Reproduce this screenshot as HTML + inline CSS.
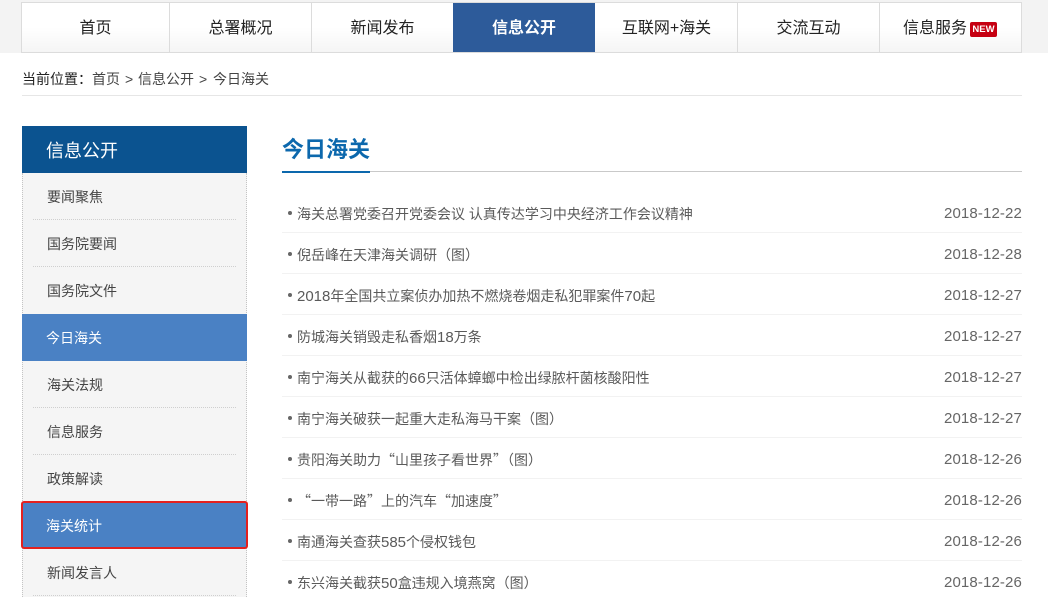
<!DOCTYPE html>
<html lang="zh-CN">
<head>
<meta charset="utf-8">
<title>今日海关</title>
<style>
html,body{margin:0;padding:0;background:#fff}
body{position:relative;width:1048px;height:597px;overflow:hidden;font-family:"Liberation Sans","Noto Sans CJK SC",sans-serif;color:#333}
div,a,span{position:absolute;display:block;white-space:nowrap;box-sizing:border-box}
span.i{position:static;display:inline}
span.n{position:static;display:inline;font-size:15px}
span.q{position:static;display:inline;font-family:"Noto Sans CJK SC",sans-serif}
.strip{left:0;top:0;width:1048px;height:53px;background:#f3f3f3}
.navwrap{left:21px;top:2px;width:1001px;height:51px;background:linear-gradient(#fff 0,#fff 50%,#f5f5f5 100%);border:1px solid #dcdcdc}
.nav{top:3px;height:49px;line-height:51px;text-align:center;font-size:16px;color:#222;border-right:1px solid #dcdcdc}
.nav.on{background:#2d5b9a;color:#fff;font-weight:bold;border-right:0}
.new{left:970px;top:22px;width:27px;height:15px;background:#c60012;border-radius:2px;color:#fff;font-size:9.5px;font-weight:bold;line-height:15px;text-align:center}
.crumb{top:70px;font-size:14px;line-height:18px;color:#444}
.crumbline{left:22px;top:95px;width:1000px;height:1px;background:#e6e6e6}
.side{left:22px;top:173px;width:225px;height:424px;background:#f5f5f5;border-left:1px dotted #c4c4c4;border-right:1px dotted #c4c4c4}
.sidehead{left:22px;top:126px;width:225px;height:47px;background:#0b5390;color:#fff;font-size:18px;line-height:50px;padding-left:24px}
.si{left:47px;font-size:14px;line-height:20px;color:#444}
.dot{left:33px;width:203px;height:1px;border-top:1px dotted #cfcfcf}
.act{left:22px;width:225px;height:47px;background:#4a81c4;color:#fff;font-size:14px;line-height:48px;padding-left:24px}
.red{left:21px;top:501px;width:227px;height:48px;border:2px solid #e3211f;border-radius:3px;background:#4a81c4;color:#fff;font-size:14px;line-height:47px;padding-left:23px}
.title{left:282px;top:133px;font-size:22px;font-weight:bold;color:#0c68ad;line-height:33px}
.tline{left:282px;top:171px;width:740px;height:1px;background:#c9c9c9}
.tline2{left:282px;top:171px;width:88px;height:2px;background:#0c68ad}
.row{left:297px;font-size:14px;line-height:20px;color:#5a5a5a}
.bul{left:288px;width:4px;height:4px;border-radius:50%;background:#666}
.date{right:26px;font-size:15px;line-height:20px;color:#666;letter-spacing:.13px}
.ln{left:282px;width:740px;height:1px;background:#f2f2f2}
</style>
</head>
<body>
<div class="strip"></div>
<div class="navwrap"></div>
<div class="nav" style="left:22px;width:148px">首页</div>
<div class="nav" style="left:170px;width:142px">总署概况</div>
<div class="nav" style="left:312px;width:142px">新闻发布</div>
<div class="nav on" style="left:453px;width:142px">信息公开</div>
<div class="nav" style="left:596px;width:142px">互联网+海关</div>
<div class="nav" style="left:738px;width:142px">交流互动</div>
<div class="nav" style="left:903px;width:70px;border:0;text-align:left">信息服务</div>
<div class="new">NEW</div>

<div class="crumb" style="left:22px;color:#222">当前位置：</div>
<div class="crumb" style="left:92px">首页</div>
<div class="crumb" style="left:125px">&gt;</div>
<div class="crumb" style="left:138px">信息公开</div>
<div class="crumb" style="left:199px">&gt;</div>
<div class="crumb" style="left:213px">今日海关</div>
<div class="crumbline"></div>

<div class="side"></div>
<div class="sidehead">信息公开</div>
<div class="si" style="top:187px">要闻聚焦</div>
<div class="dot" style="top:219px"></div>
<div class="si" style="top:234px">国务院要闻</div>
<div class="dot" style="top:266px"></div>
<div class="si" style="top:281px">国务院文件</div>
<div class="act" style="top:314px">今日海关</div>
<div class="si" style="top:375px">海关法规</div>
<div class="dot" style="top:407px"></div>
<div class="si" style="top:422px">信息服务</div>
<div class="dot" style="top:454px"></div>
<div class="si" style="top:469px">政策解读</div>
<div class="red">海关统计</div>
<div class="si" style="top:563px">新闻发言人</div>
<div class="dot" style="top:595px"></div>

<div class="title">今日海关</div>
<div class="tline"></div>
<div class="tline2"></div>

<div class="bul" style="top:211px"></div><div class="row" style="top:204px">海关总署党委召开党委会议 认真传达学习中央经济工作会议精神</div><div class="date" style="top:204px">2018-12-22</div><div class="ln" style="top:232px"></div>
<div class="bul" style="top:252px"></div><div class="row" style="top:245px">倪岳峰在天津海关调研（图）</div><div class="date" style="top:245px">2018-12-28</div><div class="ln" style="top:273px"></div>
<div class="bul" style="top:293px"></div><div class="row" style="top:286px"><span class="n">2018</span>年全国共立案侦办加热不燃烧卷烟走私犯罪案件<span class="n">70</span>起</div><div class="date" style="top:286px">2018-12-27</div><div class="ln" style="top:314px"></div>
<div class="bul" style="top:334px"></div><div class="row" style="top:327px">防城海关销毁走私香烟<span class="n">18</span>万条</div><div class="date" style="top:327px">2018-12-27</div><div class="ln" style="top:355px"></div>
<div class="bul" style="top:375px"></div><div class="row" style="top:368px">南宁海关从截获的<span class="n">66</span>只活体蟑螂中检出绿脓杆菌核酸阳性</div><div class="date" style="top:368px">2018-12-27</div><div class="ln" style="top:396px"></div>
<div class="bul" style="top:416px"></div><div class="row" style="top:409px">南宁海关破获一起重大走私海马干案（图）</div><div class="date" style="top:409px">2018-12-27</div><div class="ln" style="top:437px"></div>
<div class="bul" style="top:457px"></div><div class="row" style="top:450px">贵阳海关助力<span class="q">“</span>山里孩子看世界<span class="q">”</span>（图）</div><div class="date" style="top:450px">2018-12-26</div><div class="ln" style="top:478px"></div>
<div class="bul" style="top:498px"></div><div class="row" style="top:491px"><span class="q">“</span>一带一路<span class="q">”</span>上的汽车<span class="q">“</span>加速度<span class="q">”</span></div><div class="date" style="top:491px">2018-12-26</div><div class="ln" style="top:519px"></div>
<div class="bul" style="top:539px"></div><div class="row" style="top:532px">南通海关查获<span class="n">585</span>个侵权钱包</div><div class="date" style="top:532px">2018-12-26</div><div class="ln" style="top:560px"></div>
<div class="bul" style="top:580px"></div><div class="row" style="top:573px">东兴海关截获<span class="n">50</span>盒违规入境燕窝（图）</div><div class="date" style="top:573px">2018-12-26</div>
</body>
</html>
